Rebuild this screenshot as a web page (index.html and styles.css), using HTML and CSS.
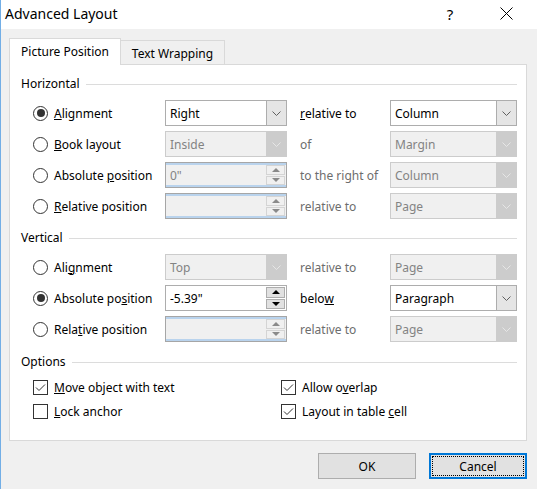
FILE: index.html
```html
<!DOCTYPE html>
<html>
<head>
<meta charset="utf-8">
<link rel="stylesheet" href="styles.css">
</head>
<body>
<div class="window">
  <div class="titlebar">
    <span class="title">Advanced Layout</span>
    <span class="spacer"></span>
    <span class="help">?</span>
    <span class="close"><svg width="13" height="13" viewBox="0 0 13 13"><path d="M0.5 0.5 L12.5 12.5 M12.5 0.5 L0.5 12.5" stroke="#000" stroke-width="1" fill="none"/></svg></span>
  </div>
  <div class="body">
    <div class="tabs">
      <div class="tab active">Picture Position</div>
      <div class="tab">Text Wrapping</div>
    </div>
    <div class="panel">
      <div class="section-head"><span>Horizontal</span><i class="rule"></i></div>
      <div class="grid grid-h">
        <div class="opt"><span class="radio on"></span><span><u>A</u>lignment</span></div>
        <div class="combo"><span class="val">Right</span><span class="arrow"><svg width="9" height="5" viewBox="0 0 9 5"><polyline points="0.5,0.5 4.5,4.5 8.5,0.5" fill="none" stroke="#606060" stroke-width="1"/></svg></span></div>
        <div class="lbl"><u>r</u>elative to</div>
        <div class="combo"><span class="val">Column</span><span class="arrow"><svg width="9" height="5" viewBox="0 0 9 5"><polyline points="0.5,0.5 4.5,4.5 8.5,0.5" fill="none" stroke="#606060" stroke-width="1"/></svg></span></div>

        <div class="opt"><span class="radio"></span><span><u>B</u>ook layout</span></div>
        <div class="combo off"><span class="val">Inside</span><span class="arrow"><svg width="9" height="5" viewBox="0 0 9 5"><polyline points="0.5,0.5 4.5,4.5 8.5,0.5" fill="none" stroke="#e6e6e6" stroke-width="1"/></svg></span></div>
        <div class="lbl off">of</div>
        <div class="combo off"><span class="val">Margin</span><span class="arrow"><svg width="9" height="5" viewBox="0 0 9 5"><polyline points="0.5,0.5 4.5,4.5 8.5,0.5" fill="none" stroke="#e6e6e6" stroke-width="1"/></svg></span></div>

        <div class="opt"><span class="radio"></span><span>Absolute <u>p</u>osition</span></div>
        <div class="spin off"><span class="val">0"</span><span class="btns"><span class="sb"><i class="up"></i></span><span class="sb"><i class="down"></i></span></span></div>
        <div class="lbl off">to the right of</div>
        <div class="combo off"><span class="val">Column</span><span class="arrow"><svg width="9" height="5" viewBox="0 0 9 5"><polyline points="0.5,0.5 4.5,4.5 8.5,0.5" fill="none" stroke="#e6e6e6" stroke-width="1"/></svg></span></div>

        <div class="opt"><span class="radio"></span><span><u>R</u>elative position</span></div>
        <div class="spin off"><span class="val"></span><span class="btns"><span class="sb"><i class="up"></i></span><span class="sb"><i class="down"></i></span></span></div>
        <div class="lbl off">relative to</div>
        <div class="combo off"><span class="val">Page</span><span class="arrow"><svg width="9" height="5" viewBox="0 0 9 5"><polyline points="0.5,0.5 4.5,4.5 8.5,0.5" fill="none" stroke="#e6e6e6" stroke-width="1"/></svg></span></div>
      </div>

      <div class="section-head sec2"><span>Vertical</span><i class="rule"></i></div>
      <div class="grid grid-v">
        <div class="opt"><span class="radio"></span><span>Ali<u>g</u>nment</span></div>
        <div class="combo off"><span class="val">Top</span><span class="arrow"><svg width="9" height="5" viewBox="0 0 9 5"><polyline points="0.5,0.5 4.5,4.5 8.5,0.5" fill="none" stroke="#e6e6e6" stroke-width="1"/></svg></span></div>
        <div class="lbl off">relative to</div>
        <div class="combo off"><span class="val">Page</span><span class="arrow"><svg width="9" height="5" viewBox="0 0 9 5"><polyline points="0.5,0.5 4.5,4.5 8.5,0.5" fill="none" stroke="#e6e6e6" stroke-width="1"/></svg></span></div>

        <div class="opt"><span class="radio on"></span><span>Absolute po<u>s</u>ition</span></div>
        <div class="spin"><span class="val">-5.39"</span><span class="btns"><span class="sb"><i class="up"></i></span><span class="sb"><i class="down"></i></span></span></div>
        <div class="lbl">belo<u>w</u></div>
        <div class="combo"><span class="val">Paragraph</span><span class="arrow"><svg width="9" height="5" viewBox="0 0 9 5"><polyline points="0.5,0.5 4.5,4.5 8.5,0.5" fill="none" stroke="#606060" stroke-width="1"/></svg></span></div>

        <div class="opt"><span class="radio"></span><span>Rela<u>t</u>ive position</span></div>
        <div class="spin off"><span class="val"></span><span class="btns"><span class="sb"><i class="up"></i></span><span class="sb"><i class="down"></i></span></span></div>
        <div class="lbl off">relative to</div>
        <div class="combo off"><span class="val">Page</span><span class="arrow"><svg width="9" height="5" viewBox="0 0 9 5"><polyline points="0.5,0.5 4.5,4.5 8.5,0.5" fill="none" stroke="#e6e6e6" stroke-width="1"/></svg></span></div>
      </div>

      <div class="section-head sec3"><span>Options</span><i class="rule"></i></div>
      <div class="checks">
        <div class="opt"><span class="check"><svg width="13" height="13" viewBox="0 0 13 13"><polyline points="2,6.5 5,9.5 11,3.5" fill="none" stroke="#333" stroke-width="1"/></svg></span><span><u>M</u>ove object with text</span></div>
        <div class="opt"><span class="check"><svg width="13" height="13" viewBox="0 0 13 13"><polyline points="2,6.5 5,9.5 11,3.5" fill="none" stroke="#333" stroke-width="1"/></svg></span><span>Allow o<u>v</u>erlap</span></div>
        <div class="opt"><span class="check"></span><span><u>L</u>ock anchor</span></div>
        <div class="opt"><span class="check"><svg width="13" height="13" viewBox="0 0 13 13"><polyline points="2,6.5 5,9.5 11,3.5" fill="none" stroke="#333" stroke-width="1"/></svg></span><span>Layout in table <u>c</u>ell</span></div>
      </div>
    </div>
    <div class="buttons">
      <div class="btn">OK</div>
      <div class="btn default"><span class="focus">Cancel</span></div>
    </div>
  </div>
</div>
</body>
</html>
```
FILE: styles.css
```css
html, body {
  margin: 0;
  padding: 0;
}
body {
  font-family: "Noto Sans", "Segoe UI", sans-serif;
  font-size: 12px;
  color: #000;
}
.window {
  width: 537px;
  height: 489px;
  box-sizing: border-box;
  border-left: 1px solid #72aee6;
  background: #f0f0f0;
  overflow: hidden;
}
.titlebar {
  height: 29px;
  background: #fff;
  display: flex;
  align-items: center;
  padding-left: 4px;
}
.title {
  font-size: 14px;
  line-height: 20px;
  margin-top: -1px;
}
.spacer { flex: 1; }
.help {
  font-size: 15px;
  width: 12px;
  text-align: center;
  margin-top: -2px;
}
.close {
  display: flex;
  margin-left: 44px;
  margin-right: 24px;
  margin-top: -2px;
}
.tabs {
  display: flex;
  align-items: flex-end;
  height: 26px;
  padding-top: 9px;
  padding-left: 8px;
}
.tab {
  box-sizing: border-box;
  height: 24px;
  width: 104px;
  border: 1px solid #d9d9d9;
  border-bottom: none;
  display: flex;
  align-items: center;
  justify-content: center;
  padding-top: 1px;
  font-size: 12px;
}
.tab.active {
  height: 27px;
  width: 112px;
  background: #fff;
  margin-bottom: -1px;
  position: relative;
  z-index: 1;
  padding-top: 0;
  padding-bottom: 2px;
}
.tab:not(.active) {
  border-left: none;
}
.panel {
  box-sizing: border-box;
  width: 518px;
  height: 377px;
  margin-left: 8px;
  background: #fff;
  border: 1px solid #d9d9d9;
  padding: 11px 9px 0 11px;
}
.section-head {
  display: flex;
  align-items: center;
  height: 16px;
  line-height: 16px;
}
.section-head .rule {
  flex: 1;
  height: 1px;
  background: #dcdcdc;
  margin-left: 6px;
  margin-top: 1px;
}
.sec2 { margin-top: 11px; }
.sec3 { margin-top: 12px; }
.grid {
  display: grid;
  grid-template-columns: 132px 122px 103px 127px;
  grid-auto-rows: 26px;
  row-gap: 5px;
  margin-left: 12px;
  margin-top: 8px;
}
.opt {
  display: flex;
  align-items: center;
  gap: 6px;
  white-space: nowrap;
}
.radio {
  box-sizing: border-box;
  width: 15px;
  height: 15px;
  border: 1px solid #333;
  border-radius: 50%;
  background: #fff;
  display: flex;
  align-items: center;
  justify-content: center;
  flex: none;
}
.radio.on::before {
  content: "";
  width: 8px;
  height: 8px;
  border-radius: 50%;
  background: #333;
}
.lbl {
  display: flex;
  align-items: center;
  padding-left: 13px;
  white-space: nowrap;
}
.lbl.off { color: #6d6d6d; }
.combo, .spin {
  box-sizing: border-box;
  height: 26px;
  border: 1px solid #adadad;
  background: #fff;
  display: flex;
  align-items: stretch;
}
.combo .val, .spin .val {
  flex: 1;
  display: flex;
  align-items: center;
  padding-left: 4px;
  white-space: nowrap;
}
.combo .arrow {
  width: 19px;
  border-left: 1px solid #adadad;
  background: #e5e5e5;
  display: flex;
  align-items: center;
  justify-content: center;
}
.combo.off {
  border-color: #cccccc;
  background: #f0f0f0;
  color: #838383;
}
.combo.off .arrow {
  background: #cccccc;
  border-left-color: #cccccc;
}
.spin .btns {
  width: 19px;
  display: flex;
  flex-direction: column;
  padding: 1px 1px 1px 0;
  gap: 1px;
}
.spin .sb {
  flex: 1;
  box-sizing: border-box;
  border: 1px solid #adadad;
  background: #e1e1e1;
  display: flex;
  align-items: center;
  justify-content: center;
}
.spin .up, .spin .down {
  width: 0;
  height: 0;
  border-left: 4px solid transparent;
  border-right: 4px solid transparent;
}
.spin .up { border-bottom: 4px solid #000; }
.spin .down { border-top: 4px solid #000; }
.spin.off {
  background: #f0f0f0;
  color: #838383;
  border-color: #a6a6a6;
  box-shadow: inset 0 2px 0 #b9d3ed, inset 0 -2px 0 #b9d3ed;
}
.spin.off .btns { padding: 2px 1px 2px 0; }
.spin.off .sb {
  background: #f0f0f0;
  border-color: #d4d4d4;
}
.spin.off .up { border-bottom-color: #8a8a8a; }
.spin.off .down { border-top-color: #8a8a8a; }
.checks {
  display: grid;
  grid-template-columns: 248px 236px;
  grid-auto-rows: 20px;
  row-gap: 4px;
  margin-left: 12px;
  margin-top: 7px;
}
.check {
  box-sizing: border-box;
  width: 15px;
  height: 15px;
  border: 1px solid #333;
  background: #fff;
  flex: none;
  display: flex;
}
.buttons {
  display: flex;
  justify-content: flex-end;
  gap: 13px;
  padding-right: 10px;
  margin-top: 12px;
}
.btn {
  box-sizing: border-box;
  width: 98px;
  height: 26px;
  border: 1px solid #adadad;
  background: #e1e1e1;
  display: flex;
  align-items: center;
  justify-content: center;
}
.btn.default {
  border: 2px solid #0078d7;
  padding: 1px;
}
.btn .focus {
  box-sizing: border-box;
  width: 100%;
  height: 100%;
  border: 1px dotted #000;
  display: flex;
  align-items: center;
  justify-content: center;
}
```
